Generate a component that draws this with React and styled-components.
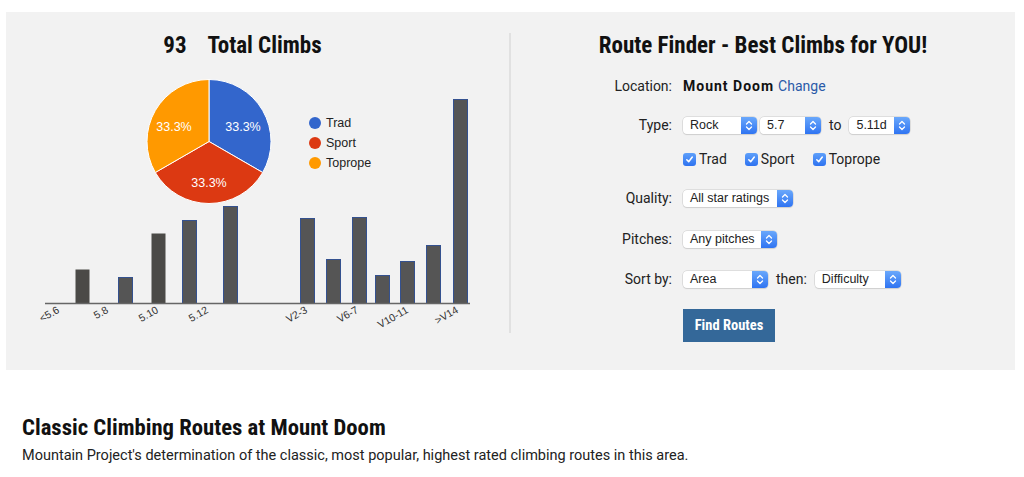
import styled, { createGlobalStyle } from "styled-components";

const GlobalStyle = createGlobalStyle`
  body {
    margin: 0;
    background: #ffffff;
    font-family: Roboto, "Liberation Sans", sans-serif;
    color: #222222;
  }
`;

const Page = styled.div`
  padding: 12px 9px 0 6px;
`;

const Panel = styled.section`
  display: grid;
  grid-template-columns: 503px 2px 1fr;
  height: 358px;
  background: #f2f2f2;
`;

const Divider = styled.div`
  background: #e1e1e1;
  margin: 21px 0 37px;
`;

const Column = styled.div`
  display: flex;
  flex-direction: column;
  padding-top: 21px;
`;

const Heading = styled.h2`
  margin: 0;
  font-family: "Roboto Condensed", Roboto, "Liberation Sans", sans-serif;
  font-stretch: condensed;
  font-weight: 700;
  font-size: ${(p) => p.$size || 23}px;
  line-height: 26px;
  color: #111111;
  text-align: ${(p) => p.$align || "center"};
  padding-right: ${(p) => p.$shift || 0}px;
`;

const Count = styled.span`
  margin-right: 21px;
`;

/* ---------- charts ---------- */

const ChartStack = styled.div`
  display: grid;
  margin-top: 11px;
  > * {
    grid-area: 1 / 1;
  }
`;

const PieRow = styled.div`
  display: flex;
  align-items: flex-start;
  padding: 9px 0 0 140px;
  align-self: start;
`;

const Legend = styled.ul`
  list-style: none;
  margin: 35px 0 0 36px;
  padding: 0;
  display: flex;
  flex-direction: column;
  gap: 3px;
`;

const LegendItem = styled.li`
  display: flex;
  align-items: center;
  gap: 5px;
  height: 17px;
  font-family: "Liberation Sans", Arial, sans-serif;
  font-size: 12.5px;
  color: #222222;

  &::before {
    content: "";
    width: 12px;
    height: 12px;
    border-radius: 50%;
    background: ${(p) => p.$color};
  }
`;

const slices = [
  { color: "#3366cc", from: 0, to: 120, label: [243, 127] },
  { color: "#dc3912", from: 120, to: 240, label: [209, 183] },
  { color: "#ff9900", from: 240, to: 360, label: [174, 127] },
];

function arcPoint(cx, cy, r, deg) {
  const a = ((deg - 90) * Math.PI) / 180;
  return [cx + r * Math.cos(a), cy + r * Math.sin(a)];
}

function Pie() {
  const cx = 63;
  const cy = 62.5;
  const r = 62;
  return (
    <svg width="127" height="126" viewBox="0 0 127 126">
      {slices.map((s) => {
        const [x1, y1] = arcPoint(cx, cy, r, s.from);
        const [x2, y2] = arcPoint(cx, cy, r, s.to);
        return (
          <path
            key={s.color}
            d={`M${cx} ${cy} L${x1} ${y1} A${r} ${r} 0 0 1 ${x2} ${y2} Z`}
            fill={s.color}
            stroke="#ffffff"
            strokeWidth="1"
          />
        );
      })}
      {slices.map((s) => (
        <text
          key={s.color + "t"}
          x={s.label[0] - 146}
          y={s.label[1] - 79 + 4}
          textAnchor="middle"
          fill="#ffffff"
          fontFamily="Liberation Sans, Arial, sans-serif"
          fontSize="12.5"
        >
          33.3%
        </text>
      ))}
    </svg>
  );
}

// page coords of each bar: [left, top, fill]
const bars = [
  [75, 269, "#4b4a47"],
  [118, 277],
  [151, 233, "#4b4a47"],
  [182, 220],
  [223, 206],
  [300, 218],
  [326, 259],
  [352, 217],
  [375, 275],
  [400, 261],
  [426, 245],
  [453, 99],
];

const labels = [
  ["<5.6", 60],
  ["5.8", 109],
  ["5.10", 159],
  ["5.12", 209],
  ["V2-3", 308],
  ["V6-7", 359],
  ["V10-11", 409],
  [">V14", 459],
];

const OX = 6;
const OY = 70;
const BASE = 303;

function BarChart() {
  return (
    <svg width="503" height="270" viewBox="0 0 503 270">
      <g transform={`translate(${-OX} ${-OY})`}>
        {bars.map(([x, top, fill], i) => (
          <rect
            key={i}
            x={x + 0.5}
            y={top + 0.5}
            width="14"
            height={BASE - top}
            fill={fill || "#555555"}
            stroke={fill ? "none" : "#34518f"}
            strokeWidth="1"
          />
        ))}
        <line x1="45" y1={BASE + 0.5} x2="470" y2={BASE + 0.5} stroke="#666666" strokeWidth="1.5" />
        {labels.map(([t, x]) => (
          <text
            key={t}
            x={x}
            y={BASE + 9}
            textAnchor="end"
            transform={`rotate(-30 ${x} ${BASE + 9})`}
            fill="#333333"
            fontFamily="Liberation Sans, Arial, sans-serif"
            fontSize="10.5"
          >
            {t}
          </text>
        ))}
      </g>
    </svg>
  );
}

/* ---------- route finder form ---------- */

const Form = styled.div`
  display: flex;
  flex-direction: column;
`;

const Row = styled.div`
  display: grid;
  grid-template-columns: 161px auto;
  column-gap: 11px;
  align-items: center;
  height: 20px;
  margin-top: ${(p) => p.$mt}px;
`;

const Label = styled.span`
  text-align: right;
  font-size: 14px;
  color: #222222;
`;

const Controls = styled.div`
  display: flex;
  align-items: center;
  gap: ${(p) => p.$gap ?? 8}px;
`;

const Place = styled.span`
  font-size: 14px;
  font-weight: 700;
  letter-spacing: 1px;
  color: #111111;
`;

const Link = styled.a`
  font-size: 14px;
  color: #2a5aa8;
  text-decoration: none;
`;

const Word = styled.span`
  font-size: 14px;
  color: #222222;
  margin: 0 ${(p) => p.$space || 0}px;
`;

const SelectBox = styled.div`
  display: flex;
  align-items: stretch;
  width: ${(p) => p.$w}px;
  height: 17px;
  box-sizing: border-box;
  background: #ffffff;
  border-radius: 4px;
  box-shadow: 0 0 0 0.5px #c9c9c9, 0 1px 1px rgba(0, 0, 0, 0.12);
  font-family: "Liberation Sans", Arial, sans-serif;
  font-size: 12.5px;
  color: #222222;
`;

const SelectText = styled.span`
  flex: 1;
  display: flex;
  align-items: center;
  padding-left: 7px;
  white-space: nowrap;
  overflow: hidden;
`;

const SelectArrow = styled.span`
  width: 16px;
  display: flex;
  align-items: center;
  justify-content: center;
  border-radius: 0 4px 4px 0;
  background: linear-gradient(#6aa8fb, #2f74f2);
`;

function Select({ w, children }) {
  return (
    <SelectBox $w={w}>
      <SelectText>{children}</SelectText>
      <SelectArrow>
        <svg width="8" height="11" viewBox="0 0 8 11">
          <path d="M1.5 4 L4 1.5 L6.5 4 M1.5 7 L4 9.5 L6.5 7" fill="none" stroke="#ffffff" strokeWidth="1.3" strokeLinecap="round" strokeLinejoin="round" />
        </svg>
      </SelectArrow>
    </SelectBox>
  );
}

const CheckLabel = styled.label`
  display: flex;
  align-items: center;
  gap: 3px;
  font-size: 14px;
  color: #222222;
`;

const Box = styled.span`
  width: 13px;
  height: 13px;
  border-radius: 3px;
  background: linear-gradient(#5ea0fa, #2e72f0);
  display: flex;
  align-items: center;
  justify-content: center;
`;

function Check({ children }) {
  return (
    <CheckLabel>
      <Box>
        <svg width="9" height="9" viewBox="0 0 9 9">
          <path d="M1.8 4.8 L3.7 6.8 L7.3 2" fill="none" stroke="#ffffff" strokeWidth="1.5" strokeLinecap="round" strokeLinejoin="round" />
        </svg>
      </Box>
      {children}
    </CheckLabel>
  );
}

const ButtonRow = styled.div`
  display: grid;
  grid-template-columns: 161px auto;
  column-gap: 11px;
  margin-top: 20px;
`;

const Button = styled.button`
  grid-column: 2;
  justify-self: start;
  width: 92px;
  height: 33px;
  border: none;
  background: #346899;
  color: #ffffff;
  font-family: "Roboto Condensed", Roboto, "Liberation Sans", sans-serif;
  font-stretch: condensed;
  font-weight: 700;
  font-size: 14.5px;
  cursor: pointer;
`;

/* ---------- classic routes ---------- */

const Classic = styled.section`
  padding: 45px 0 0 16px;
`;

const Text = styled.p`
  margin: 5px 0 0;
  font-size: 14.5px;
  line-height: 20px;
  color: #222222;
`;

export default function App() {
  return (
    <Page>
      <GlobalStyle />
      <Panel>
        <Column>
          <Heading $shift={30}>
            <Count>93</Count>Total Climbs
          </Heading>
          <ChartStack>
            <BarChart />
            <PieRow>
              <Pie />
              <Legend>
                <LegendItem $color="#3366cc">Trad</LegendItem>
                <LegendItem $color="#dc3912">Sport</LegendItem>
                <LegendItem $color="#ff9900">Toprope</LegendItem>
              </Legend>
            </PieRow>
          </ChartStack>
        </Column>
        <Divider />
        <Column>
          <Heading>Route Finder - Best Climbs for YOU!</Heading>
          <Form>
            <Row $mt={17}>
              <Label>Location:</Label>
              <Controls $gap={4}>
                <Place>Mount Doom</Place>
                <Link href="#">Change</Link>
              </Controls>
            </Row>
            <Row $mt={19}>
              <Label>Type:</Label>
              <Controls $gap={3}>
                <Select w={74}>Rock</Select>
                <Select w={61}>5.7</Select>
                <Word $space={5}>to</Word>
                <Select w={61}>5.11d</Select>
              </Controls>
            </Row>
            <Row $mt={14}>
              <span />
              <Controls $gap={18}>
                <Check>Trad</Check>
                <Check>Sport</Check>
                <Check>Toprope</Check>
              </Controls>
            </Row>
            <Row $mt={19}>
              <Label>Quality:</Label>
              <Controls>
                <Select w={110}>All star ratings</Select>
              </Controls>
            </Row>
            <Row $mt={21}>
              <Label>Pitches:</Label>
              <Controls>
                <Select w={94}>Any pitches</Select>
              </Controls>
            </Row>
            <Row $mt={20}>
              <Label>Sort by:</Label>
              <Controls>
                <Select w={85}>Area</Select>
                <Word>then:</Word>
                <Select w={86}>Difficulty</Select>
              </Controls>
            </Row>
            <ButtonRow>
              <Button>Find Routes</Button>
            </ButtonRow>
          </Form>
        </Column>
      </Panel>
      <Classic>
        <Heading $align="left" $size={22.7}>
          Classic Climbing Routes at Mount Doom
        </Heading>
        <Text>
          Mountain Project's determination of the classic, most popular, highest rated climbing routes in this area.
        </Text>
      </Classic>
    </Page>
  );
}
